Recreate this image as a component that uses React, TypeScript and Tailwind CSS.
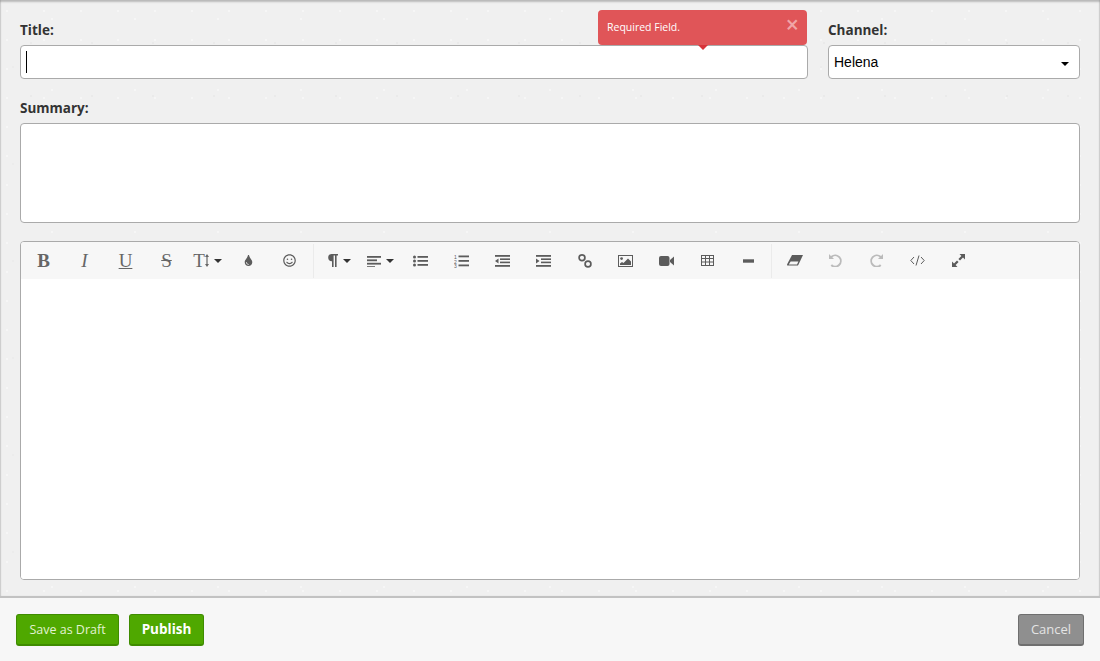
import React from "react";
import { FaTint, FaRegSmile } from "react-icons/fa";

const Icon = ({ children, w = 16, h = 14, vb }: { children: React.ReactNode; w?: number; h?: number; vb?: string }) => (
  <svg width={w} height={h} viewBox={vb || `0 0 ${w} ${h}`} fill="currentColor">
    {children}
  </svg>
);

const Caret = () => <span className="ml-[5px] border-x-[4px] border-t-[4px] border-x-transparent border-t-[#333]" />;

const ToolButton = ({ children, muted }: { children: React.ReactNode; muted?: boolean }) => (
  <button className={`flex h-[37px] w-[41px] shrink-0 items-center justify-center ${muted ? "text-[#bbbbbb]" : "text-[#5c5c5c]"}`}>
    {children}
  </button>
);

const serif = "font-['Liberation_Serif',serif] text-[19px] leading-none text-[#666666]";
const labelText = "block text-[13.5px] leading-[20px] font-bold text-[#333333]";

const Lines = ({ widths, x = 0 }: { widths: number[]; x?: number }) => (
  <>
    {widths.map((w, i) => (
      <rect key={i} x={x} y={1 + i * 3.4} width={w} height="1.8" />
    ))}
  </>
);

const toolbarFirst = [
  <span className={`${serif} font-bold`}>B</span>,
  <span className={`${serif} italic`}>I</span>,
  <span className={`${serif} underline`}>U</span>,
  <span className={`${serif} line-through`}>S</span>,
];

const App = () => {
  return (
    <div className="flex h-[661px] w-[1100px] flex-col overflow-hidden bg-[#f7f7f7] font-['Open_Sans',sans-serif]">
      <div className="flex h-[598px] flex-col border-b-2 border-[#c2c2c2] bg-[#f0f0f0] bg-[radial-gradient(circle_at_7px_11px,#f6f6f6_1px,transparent_1.5px),radial-gradient(circle_at_31px_43px,#eaeaea_1px,transparent_1.5px),radial-gradient(circle_at_52px_19px,#f6f6f6_1px,transparent_1.5px),radial-gradient(circle_at_13px_67px,#ececec_1px,transparent_1.5px)] bg-[length:37px_29px,61px_53px,83px_71px,101px_97px] px-5 pt-[20px] shadow-[inset_0_2px_2px_rgba(0,0,0,0.22),inset_1px_0_1px_rgba(0,0,0,0.1),inset_-1px_0_1px_rgba(0,0,0,0.1)]">
        <div className="flex gap-5">
          <div className="relative flex-1">
            <label className={`${labelText} h-[25px]`}>Title:</label>
            <div className="flex h-[34px] items-center rounded-[4px] border border-[#aaaaaa] bg-white pl-[5px]">
              <span className="h-[22px] w-px bg-black" />
            </div>
            <div className="absolute top-[-10px] left-[578px] flex h-[35px] w-[209px] rounded-[4px] bg-[#e05558] pt-[9px] pl-[9px] text-[10.5px] leading-[16px] text-white">
              Required Field.
              <span className="absolute top-[3px] right-[8px] text-[23px] leading-[23px] font-semibold text-[#f0a5a7]">×</span>
              <span className="absolute top-[35px] left-[100px] border-x-[5px] border-t-[5px] border-x-transparent border-t-[#d8343a]" />
            </div>
          </div>
          <div className="w-[252px] shrink-0">
            <label className={`${labelText} h-[25px]`}>Channel:</label>
            <div className="flex h-[34px] items-center justify-between rounded-[4px] border border-[#aaaaaa] bg-white pr-[10px] pl-[5px] font-['Liberation_Sans',sans-serif] text-[14px] text-black">
              Helena
              <span className="mt-[4px] border-x-[4px] border-t-[4px] border-x-transparent border-t-black" />
            </div>
          </div>
        </div>

        <label className={`${labelText} mt-[19px] h-[25px]`}>Summary:</label>
        <div className="h-[100px] rounded-[4px] border border-[#aaaaaa] bg-white" />

        <div className="mt-[18px] flex h-[339px] flex-col overflow-hidden rounded-[4px] border border-[#aaaaaa] bg-white">
          <div className="flex h-[37px] items-center bg-[#f7f7f7] pl-[2px]">
            {toolbarFirst.map((glyph, i) => (
              <ToolButton key={i}>{glyph}</ToolButton>
            ))}
            <ToolButton>
              <span className={`${serif} flex items-center`}>
                T
                <svg width="4" height="13" viewBox="0 0 4 13" fill="currentColor">
                  <path d="M2 0 4 3H2.6v7H4l-2 3-2-3h1.4V3H0z" />
                </svg>
                <Caret />
              </span>
            </ToolButton>
            <ToolButton>
              <FaTint size={11} />
            </ToolButton>
            <ToolButton>
              <FaRegSmile size={13} />
            </ToolButton>
            <span className="mr-[4px] ml-[3px] h-[34px] w-px bg-[#ebebeb]" />
            <ToolButton>
              <span className="ml-[1px] flex items-center">
                <Icon w={10} h={13}>
                  <path d="M3.6 0H10v1.6H8.6V13H7V1.6H5.6V13H4V7.2A3.6 3.6 0 0 1 3.6 0z" />
                </Icon>
                <Caret />
              </span>
            </ToolButton>
            <ToolButton>
              <span className="ml-[1px] flex items-center">
                <Icon w={14} h={12}>
                  <Lines widths={[14, 10, 14, 8]} />
                </Icon>
                <Caret />
              </span>
            </ToolButton>
            <ToolButton>
              <Icon w={15} h={12}>
                <circle cx="1.5" cy="2" r="1.5" />
                <circle cx="1.5" cy="6" r="1.5" />
                <circle cx="1.5" cy="10" r="1.5" />
                <rect x="4.5" y="1" width="10.5" height="1.8" />
                <rect x="4.5" y="5" width="10.5" height="1.8" />
                <rect x="4.5" y="9" width="10.5" height="1.8" />
              </Icon>
            </ToolButton>
            <ToolButton>
              <Icon w={15} h={14}>
                <text x="0" y="4.5" fontSize="5" fontFamily="Liberation Sans">1</text>
                <text x="0" y="9.5" fontSize="5" fontFamily="Liberation Sans">2</text>
                <text x="0" y="14" fontSize="5" fontFamily="Liberation Sans">3</text>
                <rect x="4.5" y="1.5" width="10.5" height="1.8" />
                <rect x="4.5" y="6" width="10.5" height="1.8" />
                <rect x="4.5" y="10.5" width="10.5" height="1.8" />
              </Icon>
            </ToolButton>
            <ToolButton>
              <Icon w={15} h={12}>
                <rect x="0" y="0" width="15" height="1.8" />
                <rect x="5" y="3.4" width="10" height="1.6" />
                <rect x="5" y="6.6" width="10" height="1.6" />
                <rect x="0" y="10" width="15" height="1.8" />
                <path d="M3.5 3.4v5L0 5.9z" />
              </Icon>
            </ToolButton>
            <ToolButton>
              <Icon w={15} h={12}>
                <rect x="0" y="0" width="15" height="1.8" />
                <rect x="5" y="3.4" width="10" height="1.6" />
                <rect x="5" y="6.6" width="10" height="1.6" />
                <rect x="0" y="10" width="15" height="1.8" />
                <path d="M0 3.4v5l3.5-2.5z" />
              </Icon>
            </ToolButton>
            <ToolButton>
              <Icon w={14} h={14}>
                <g fill="none" stroke="currentColor" strokeWidth="1.7">
                  <circle cx="4" cy="3.8" r="2.9" />
                  <circle cx="10" cy="10" r="2.9" />
                </g>
              </Icon>
            </ToolButton>
            <ToolButton>
              <Icon w={15} h={12}>
                <rect x="0.5" y="0.5" width="14" height="11" fill="none" stroke="currentColor" />
                <circle cx="3.6" cy="3.6" r="1.4" />
                <path d="M2 10V8.5L4 7l1.5 1L10 3.5l3 3V10z" />
              </Icon>
            </ToolButton>
            <ToolButton>
              <Icon w={15} h={12}>
                <rect x="0" y="1" width="10.5" height="10" rx="2" />
                <path d="M11 5 15 1.5v9L11 7z" />
              </Icon>
            </ToolButton>
            <ToolButton>
              <Icon w={13} h={11}>
                <path
                  fillRule="evenodd"
                  d="M0 0h13v11H0zM1 1v2h3V1zm4 0v2h3V1zm4 0v2h3V1zM1 4v2.5h3V4zm4 0v2.5h3V4zm4 0v2.5h3V4zM1 7.5V10h3V7.5zm4 0V10h3V7.5zm4 0V10h3V7.5z"
                />
              </Icon>
            </ToolButton>
            <ToolButton>
              <Icon w={11} h={4}>
                <rect width="11" height="3.4" y="0.3" />
              </Icon>
            </ToolButton>
            <span className="mx-[2px] h-[34px] w-px bg-[#ebebeb]" />
            <ToolButton>
              <Icon w={16} h={11}>
                <path d="M5 0h11l-4.5 9.6-.6.9H.2L0 9.6z" />
                <path d="M1.8 9.6h8.2l1.4-3H3.6z" fill="#f7f7f7" />
              </Icon>
            </ToolButton>
            <ToolButton muted>
              <Icon w={13} h={13}>
                <path d="M0 0v5h5L3.3 3.3A4.6 4.6 0 1 1 3 10.2l-1.4 1.6A6.6 6.6 0 1 0 1.9 1.9z" />
              </Icon>
            </ToolButton>
            <ToolButton muted>
              <Icon w={13} h={13}>
                <path d="M13 0v5H8l1.7-1.7a4.6 4.6 0 1 0 .3 6.9l1.4 1.6A6.6 6.6 0 1 1 11.1 1.9z" />
              </Icon>
            </ToolButton>
            <ToolButton>
              <Icon w={15} h={11}>
                <g fill="none" stroke="currentColor" strokeWidth="1">
                  <path d="M4 2 .8 5.5 4 9M11 2l3.2 3.5L11 9M9 .5 6 10.5" />
                </g>
              </Icon>
            </ToolButton>
            <ToolButton>
              <Icon w={13} h={13}>
                <path d="M7.5 0H13v5.5L11 3.6 8 6.6 6.4 5l3-3zM5 6.4 6.6 8l-3 3L5.5 13H0V7.5L2 9.4z" />
              </Icon>
            </ToolButton>
          </div>
          <div className="flex-1 bg-white" />
        </div>
      </div>

      <div className="flex flex-1 items-start justify-between pt-[16px] pr-[16px] pl-[16px]">
        <div className="flex gap-[10px]">
          <button className="flex h-[32px] w-[103px] items-center justify-center rounded-[3px] border border-b-2 border-[#3f8c00] bg-[#4fa800] pt-[1px] text-[12.5px] text-[#e2f2d2]">
            Save as Draft
          </button>
          <button className="flex h-[32px] w-[75px] items-center justify-center rounded-[3px] border border-b-2 border-[#3f8c00] bg-[#4fa800] pb-[1px] text-[13.5px] font-bold text-white">
            Publish
          </button>
        </div>
        <button className="flex h-[32px] w-[66px] items-center justify-center rounded-[3px] border border-b-2 border-[#6f6f6f] bg-[#8f8f8f] text-[13px] text-[#e4e4e4]">
          Cancel
        </button>
      </div>
    </div>
  );
};

export default App;
